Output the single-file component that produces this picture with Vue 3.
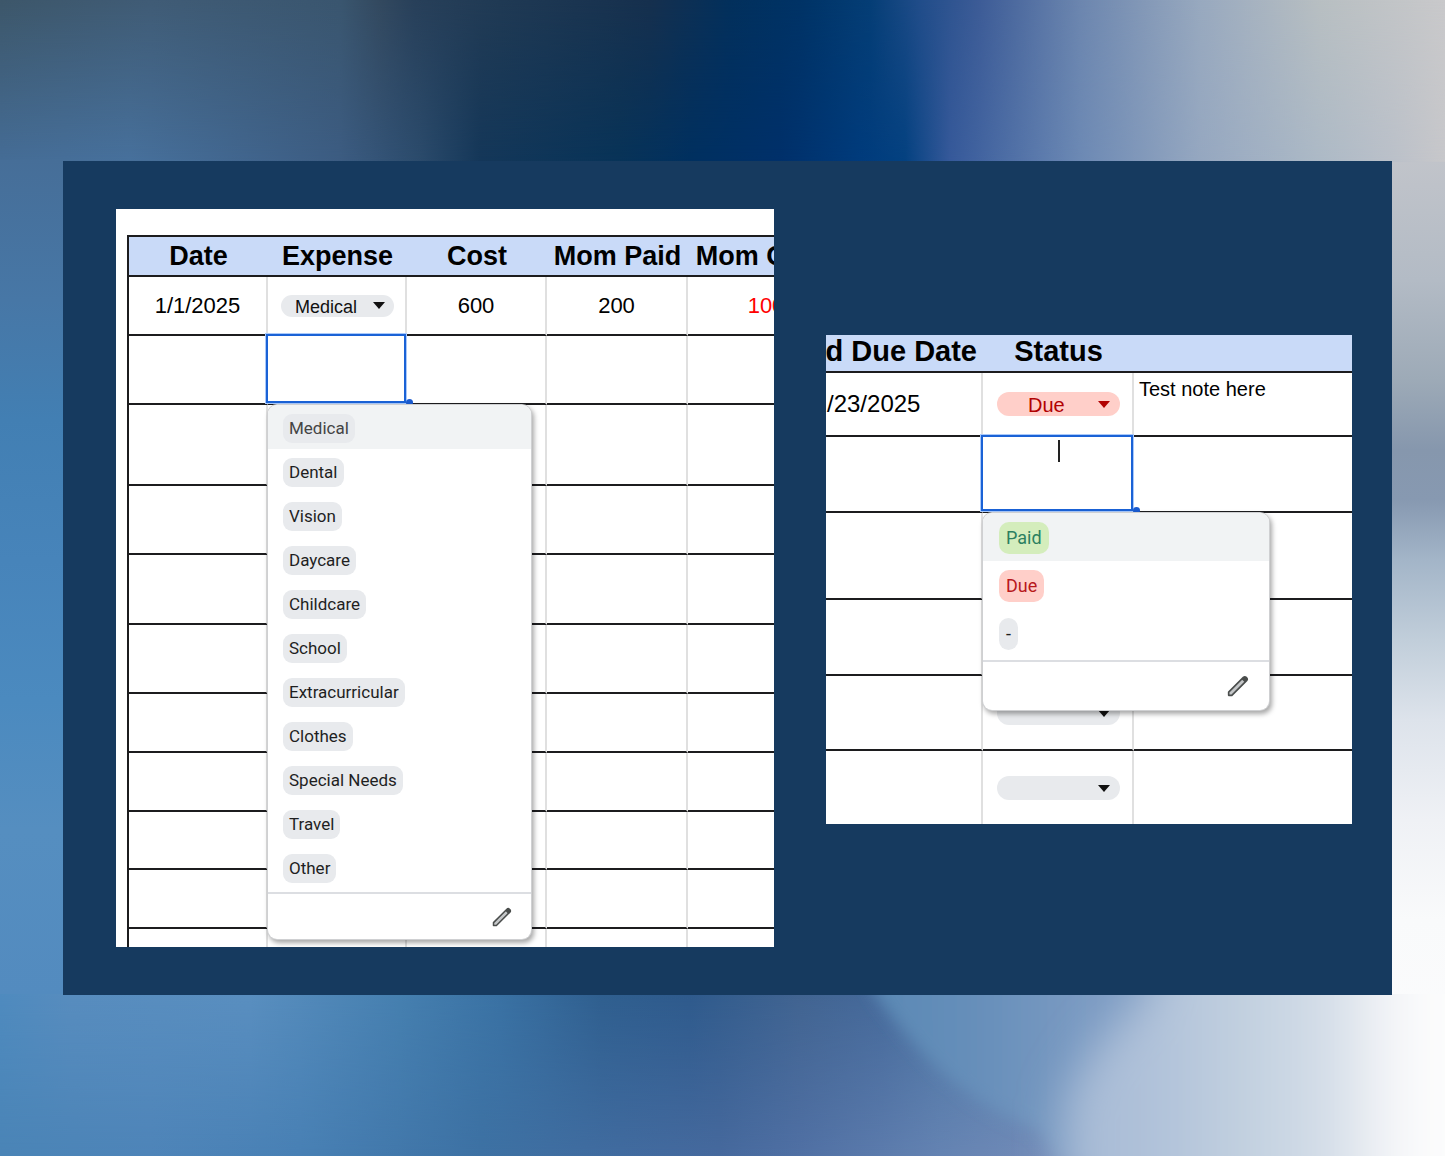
<script setup>
import { ref } from 'vue'

const expense = ref('Medical')
const status = ref('Due')

const expenseOptions = [
  'Medical', 'Dental', 'Vision', 'Daycare', 'Childcare', 'School',
  'Extracurricular', 'Clothes', 'Special Needs', 'Travel', 'Other',
]
const statusOptions = [
  { label: 'Paid', tone: 'green' },
  { label: 'Due', tone: 'red' },
  { label: '-', tone: 'grey' },
]

// Heights of the blank ledger rows under the open editor
const expenseRows = [81, 69, 70, 69, 59, 59, 58, 59, 30]
const statusRows = [
  { height: 87, chip: false },
  { height: 76, chip: false },
  { height: 75, chip: true },
  { height: 76, chip: true },
]

// Backdrop gradients: [position, colour] along each axis
const gradients = [
  { id: 'top-a', span: 1445, vertical: false, stops: [[0, '#3d576a'], [150, '#405c76'], [340, '#3a566f'], [380, '#33495f'], [415, '#28405a'], [500, '#203a54'], [650, '#16304e'], [730, '#03305c'], [800, '#003366'], [870, '#053e76'], [920, '#214d8a'], [980, '#3d5c97'], [1080, '#6c86af'], [1200, '#98a9bf'], [1320, '#b8bfc2'], [1445, '#c9c9cb']] },
  { id: 'top-b', span: 1445, vertical: false, stops: [[0, '#456d97'], [130, '#47719d'], [340, '#3c5c82'], [420, '#2b4b6c'], [480, '#143759'], [620, '#073358'], [690, '#003060'], [780, '#00306a'], [860, '#003b7c'], [905, '#034180'], [950, '#36599a'], [1080, '#6c89b4'], [1200, '#95a7c0'], [1320, '#acb9c6'], [1392, '#bac0c9'], [1445, '#c7c7ca']] },
  { id: 'bottom-a', span: 1445, vertical: false, stops: [[0, '#4f8bbf'], [70, '#588dbf'], [250, '#5a8fc0'], [400, '#4680b0'], [500, '#3a72a4'], [600, '#2f5f8f'], [690, '#2e5a8c'], [800, '#416491'], [880, '#45699a'], [1000, '#5580ac'], [1445, '#6890b8']] },
  { id: 'bottom-b', span: 1445, vertical: false, stops: [[0, '#4a84b6'], [150, '#4e84b8'], [300, '#4880b4'], [480, '#3d71a3'], [620, '#416b9f'], [720, '#46699d'], [800, '#5070a4'], [940, '#6483b2'], [1020, '#6f89b6'], [1445, '#7890ba']] },
  { id: 'wedge', span: 1445, vertical: false, stops: [[880, '#5b89b5'], [980, '#678fba'], [1080, '#7a9ac2'], [1200, '#8aa5c8']] },
  { id: 'light', span: 1445, vertical: false, stops: [[1030, '#a3b8d4'], [1150, '#afc1d9'], [1250, '#c3d1e0'], [1320, '#d2dce7'], [1360, '#e3e8ef'], [1395, '#f6f7f9'], [1445, '#fdfdfd']] },
  { id: 'left', span: 1156, vertical: true, stops: [[160, '#466e98'], [300, '#4777a6'], [420, '#427fb3'], [560, '#4784ba'], [700, '#4b8abf'], [830, '#558ec0'], [996, '#538bbf']] },
  { id: 'right', span: 1156, vertical: true, stops: [[160, '#c1c4ca'], [280, '#b3bbc5'], [380, '#9daab7'], [450, '#8697ad'], [500, '#8799b1'], [560, '#a3b5c8'], [640, '#c1ceda'], [720, '#dde3eb'], [820, '#eff1f5'], [920, '#f9fafb'], [1080, '#fcfcfd']] },
]
</script>

<template>
  <main class="page">
    <svg class="backdrop" viewBox="0 0 1445 1156" preserveAspectRatio="none" aria-hidden="true">
      <defs>
        <linearGradient
          v-for="g in gradients" :id="g.id" :key="g.id" gradientUnits="userSpaceOnUse"
          x1="0" y1="0" :x2="g.vertical ? 0 : g.span" :y2="g.vertical ? g.span : 0"
        >
          <stop v-for="s in g.stops" :key="s[0]" :offset="s[0] / g.span" :stop-color="s[1]" />
        </linearGradient>
        <linearGradient id="fade-down" x1="0" y1="0" x2="0" y2="1">
          <stop offset="0" stop-color="#000" /><stop offset="1" stop-color="#fff" />
        </linearGradient>
        <mask id="mask-top" maskUnits="userSpaceOnUse" x="0" y="0" width="1445" height="165">
          <rect width="1445" height="165" fill="url(#fade-down)" />
        </mask>
        <mask id="mask-bottom" maskUnits="userSpaceOnUse" x="0" y="990" width="1445" height="166">
          <rect y="990" width="1445" height="166" fill="url(#fade-down)" />
        </mask>
        <filter id="soft" x="-20%" y="-20%" width="140%" height="140%"><feGaussianBlur stdDeviation="8" /></filter>
        <filter id="softer" x="-20%" y="-30%" width="140%" height="160%"><feGaussianBlur stdDeviation="22" /></filter>
      </defs>
      <rect width="1445" height="165" fill="url(#top-a)" />
      <rect width="1445" height="165" fill="url(#top-b)" mask="url(#mask-top)" />
      <rect y="990" width="1445" height="166" fill="url(#bottom-a)" />
      <rect y="990" width="1445" height="166" fill="url(#bottom-b)" mask="url(#mask-bottom)" />
      <path d="M850 940 876 996Q905 1036 936 1067Q980 1108 1037 1130L1060 1160H1200V940Z" fill="url(#wedge)" filter="url(#soft)" />
      <path d="M1180 900 1145 996 1096 1047 1064 1100 1062 1250H1600V900Z" fill="url(#light)" filter="url(#softer)" />
      <rect y="160" width="200" height="834" fill="url(#left)" />
      <rect x="1300" y="162" width="145" height="832" fill="url(#right)" />
    </svg>

    <section class="panel">
      <div class="sheet sheet-expense">
        <table class="grid grid-expense">
          <colgroup><col class="e1"><col class="e2"><col class="e3"><col class="e4"><col class="e5"></colgroup>
          <thead>
            <tr><th>Date</th><th>Expense</th><th>Cost</th><th>Mom Paid</th><th>Mom Owes</th></tr>
          </thead>
          <tbody>
            <tr class="entry">
              <td>1/1/2025</td>
              <td>
                <div class="chip">
                  <select v-model="expense" aria-label="Expense">
                    <option v-for="o in expenseOptions" :key="o">{{ o }}</option>
                  </select>
                  <svg class="arrow" viewBox="0 0 12 7" aria-hidden="true"><path d="M0 0H12L6 7Z" fill="currentColor" /></svg>
                </div>
              </td>
              <td>600</td><td>200</td><td class="owed">100</td>
            </tr>
            <tr class="editing">
              <td></td>
              <td class="anchor">
                <div class="cell-editor"></div>
                <div class="menu">
                  <ul role="listbox" aria-label="Expense options">
                    <li v-for="(o, i) in expenseOptions" :key="o" role="option" :class="{ active: i === 0 }">
                      <span class="pill">{{ o }}</span>
                    </li>
                  </ul>
                  <div class="menu-foot">
                    <button type="button" aria-label="Edit options">
                      <svg viewBox="0 0 20 20" aria-hidden="true"><path d="M1.500 18.500V15.600L14.900 2.200Q16.200 1 17.400 2.200L17.800 2.600Q19 3.900 17.800 5.100L4.400 18.500Z" fill="#c4c6c8" stroke="#4a4d4c" stroke-width="1.500" stroke-linejoin="round" /><path d="M13.300 3.800 16.200 6.700 17.900 5Q19 3.900 17.900 2.700L17.300 2.100Q16.200 1 15 2.100Z" fill="#4a4d4c" /></svg>
                    </button>
                  </div>
                </div>
              </td>
              <td></td><td></td><td></td>
            </tr>
            <tr v-for="(h, i) in expenseRows" :key="i" :style="{ height: h + 'px' }">
              <td v-for="c in 5" :key="c"></td>
            </tr>
          </tbody>
        </table>
      </div>

      <div class="sheet sheet-status">
        <table class="grid grid-status">
          <colgroup><col class="s1"><col class="s2"><col></colgroup>
          <thead>
            <tr><th><div class="tail">d Due Date</div></th><th>Status</th><th></th></tr>
          </thead>
          <tbody>
            <tr class="entry">
              <td class="date">/23/2025</td>
              <td>
                <div class="chip red">
                  <select v-model="status" aria-label="Status">
                    <option v-for="o in statusOptions" :key="o.label">{{ o.label }}</option>
                  </select>
                  <svg class="arrow" viewBox="0 0 12 7" aria-hidden="true"><path d="M0 0H12L6 7Z" fill="currentColor" /></svg>
                </div>
              </td>
              <td class="note">Test note here</td>
            </tr>
            <tr class="editing">
              <td></td>
              <td class="anchor">
                <div class="cell-editor"><span class="caret"></span></div>
                <div class="menu">
                  <ul role="listbox" aria-label="Status options">
                    <li v-for="(o, i) in statusOptions" :key="o.label" role="option" :class="{ active: i === 0 }">
                      <span class="pill" :class="o.tone">{{ o.label }}</span>
                    </li>
                  </ul>
                  <div class="menu-foot">
                    <button type="button" aria-label="Edit options">
                      <svg viewBox="0 0 20 20" aria-hidden="true"><path d="M1.500 18.500V15.600L14.900 2.200Q16.200 1 17.400 2.200L17.800 2.600Q19 3.900 17.800 5.100L4.400 18.500Z" fill="#c4c6c8" stroke="#4a4d4c" stroke-width="1.500" stroke-linejoin="round" /><path d="M13.300 3.800 16.200 6.700 17.900 5Q19 3.900 17.900 2.700L17.300 2.100Q16.200 1 15 2.100Z" fill="#4a4d4c" /></svg>
                    </button>
                  </div>
                </div>
              </td>
              <td></td>
            </tr>
            <tr v-for="(r, i) in statusRows" :key="i" :style="{ height: r.height + 'px' }">
              <td></td>
              <td>
                <div v-if="r.chip" class="chip">
                  <select aria-label="Status"><option></option></select>
                  <svg class="arrow" viewBox="0 0 12 7" aria-hidden="true"><path d="M0 0H12L6 7Z" fill="currentColor" /></svg>
                </div>
              </td>
              <td></td>
            </tr>
          </tbody>
        </table>
      </div>
    </section>
  </main>
</template>

<style>
body {
  margin: 0;
}
</style>

<style scoped>
.page {
  position: relative;
  display: flex;
  align-items: center;
  box-sizing: border-box;
  min-height: 100vh;
  padding: 161px 53px 161px 63px;
  font-family: "Liberation Sans", Arial, sans-serif;
  color: #000;
}
.backdrop {
  position: absolute;
  inset: 0;
  width: 100%;
  height: 100%;
}
.panel {
  position: relative;
  display: flex;
  flex: 1;
  align-items: flex-start;
  gap: 52px;
  min-width: 0;
  padding: 48px 40px 48px 53px;
  background: #163a5f;
}
.sheet {
  box-sizing: border-box;
  min-width: 0;
  overflow: hidden;
  background: #fff;
}
.sheet-expense {
  flex: 658 1 0;
  height: 738px;
  padding-top: 26px;
}
.sheet-status {
  flex: 526 1 0;
  height: 489px;
  margin-top: 126px;
}

.grid {
  table-layout: fixed;
  border-collapse: separate;
  border-spacing: 0;
}
.grid-expense {
  width: 719px;
  margin-left: 11px;
  border-top: 2px solid #1c1c1e;
  border-left: 2px solid #1c1c1e;
  font-size: 22px;
}
.grid-status {
  width: 100%;
  font-size: 24px;
}
.e1, .e2 { width: 139px; }
.e3 { width: 140px; }
.e4 { width: 141px; }
.e5 { width: 158px; }
.s1 { width: 157px; }
.s2 { width: 151px; }

th, td {
  box-sizing: border-box;
  padding: 0;
  border-bottom: 2px solid #1c1c1e;
  text-align: center;
  white-space: nowrap;
}
td {
  border-right: 2px solid #e0e0e0;
}
.grid-status td:last-child {
  border-right: 0;
}
th {
  background: #c9daf8;
  font-weight: 700;
}
.grid-expense thead tr { height: 40px; }
.grid-expense th { font-size: 27px; line-height: 38px; }
.grid-expense .entry { height: 59px; }
.grid-expense .editing { height: 69px; }
.grid-status thead tr { height: 38px; }
.grid-status th { font-size: 29px; line-height: 32px; padding-bottom: 4px; }
.grid-status .entry { height: 64px; }
.grid-status .editing { height: 76px; }

.owed { color: #f00; }
.tail {
  display: flex;
  justify-content: flex-end;
  padding-right: 6px;
}
.grid-status .date {
  padding-left: 1px;
  text-align: left;
}
.grid-status .note {
  padding: 5px 0 0 5px;
  font-size: 20px;
  line-height: 22px;
  text-align: left;
  vertical-align: top;
}

.chip {
  position: relative;
  height: 22px;
  margin: 0 11px 0 13px;
  border-radius: 12px;
  background: #e8eaed;
  color: #111;
}
.grid-status .chip {
  height: 24px;
  margin: 0 12px 0 14px;
}
.grid-status .chip.red {
  background: #ffcfc9;
  color: #b10202;
}
.chip select {
  display: block;
  width: 100%;
  height: 100%;
  padding: 2px 0 0 14px;
  border: 0;
  background: transparent;
  color: inherit;
  font: 18px/20px "Liberation Sans", Arial, sans-serif;
  appearance: none;
}
.grid-status .chip select {
  padding-left: 31px;
  font-size: 20px;
  line-height: 22px;
}
.arrow {
  position: absolute;
  top: 7px;
  right: 9px;
  width: 12px;
  height: 7px;
  pointer-events: none;
}
.grid-status .arrow {
  top: 9px;
  right: 10px;
}

.anchor {
  position: relative;
}
.cell-editor {
  position: absolute;
  inset: -2px -1px 0 -2px;
  border: 2px solid #1a62d6;
  box-shadow: 0 0 0 1px #a9c9fb;
  background: #fff;
}
.cell-editor::after {
  content: "";
  position: absolute;
  right: -9px;
  bottom: -5px;
  width: 7px;
  height: 7px;
  border-radius: 4px;
  background: #1a5bd0;
}
.caret {
  position: absolute;
  top: 3px;
  left: 51%;
  width: 2px;
  height: 22px;
  background: #222;
}

.menu {
  position: absolute;
  z-index: 2;
  top: calc(100% + 2px);
  left: 0;
  width: 263px;
  overflow: hidden;
  border-radius: 9px;
  background: #fff;
  box-shadow: 0 0 0 1px #cfd0d2, 2px 3px 5px 1px rgba(0, 0, 0, 0.35);
  font-family: Roboto, "Liberation Sans", sans-serif;
  font-size: 17px;
}
.grid-status .menu {
  width: 286px;
  font-size: 18px;
}
.menu ul {
  margin: 0;
  padding: 0 0 3px;
  border-bottom: 2px solid #dcdee2;
  list-style: none;
}
.menu li {
  display: flex;
  align-items: center;
  box-sizing: border-box;
  height: 44px;
  padding: 2px 0 0 15px;
}
.menu li.active {
  background: #f1f3f4;
}
.menu li.active .pill {
  color: #444;
}
.pill {
  padding: 0 6px;
  border-radius: 9px;
  background: #e8eaed;
  color: #1f1f1f;
  line-height: 29px;
}
.grid-status .menu li {
  height: 48px;
  padding-left: 16px;
}
.grid-status .pill {
  padding: 0 7px;
  border-radius: 10px;
  line-height: 32px;
}
.menu .pill.green {
  background: #d4edbc;
}
.menu li.active .pill.green {
  color: #2b8060;
}
.menu .pill.red {
  background: #ffcfc9;
  color: #b8181c;
}
.menu-foot {
  display: flex;
  align-items: center;
  justify-content: flex-end;
  height: 45px;
  padding-right: 19px;
}
.menu-foot button {
  display: flex;
  padding: 0;
  border: 0;
  background: none;
}
.menu-foot svg {
  width: 20px;
  height: 20px;
}
.grid-status .menu-foot {
  height: 48px;
  padding-right: 20px;
}
.grid-status .menu-foot svg {
  width: 22px;
  height: 22px;
}
</style>
